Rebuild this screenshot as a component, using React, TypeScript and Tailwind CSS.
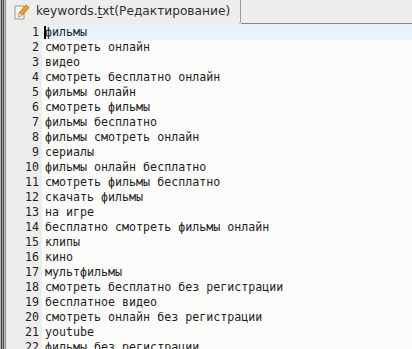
const lines = [
  'фильмы',
  'смотреть онлайн',
  'видео',
  'смотреть бесплатно онлайн',
  'фильмы онлайн',
  'смотреть фильмы',
  'фильмы бесплатно',
  'фильмы смотреть онлайн',
  'сериалы',
  'фильмы онлайн бесплатно',
  'смотреть фильмы бесплатно',
  'скачать фильмы',
  'на игре',
  'бесплатно смотреть фильмы онлайн',
  'клипы',
  'кино',
  'мультфильмы',
  'смотреть бесплатно без регистрации',
  'бесплатное видео',
  'смотреть онлайн без регистрации',
  'youtube',
  'фильмы без регистрации',
]

function EditIcon() {
  return (
    <svg width="16" height="17" viewBox="0 0 16 17" className="shrink-0">
      <path d="M1 3h9v13H1z" fill="#f4f4f2" stroke="#9a9a96" strokeWidth="1" />
      <path d="M4 14l1-4 7-8 3 2.5-7 8z" fill="#f0a020" stroke="#b06a10" strokeWidth="0.8" />
      <path d="M4 14l1-4 3 2.5z" fill="#f3d9a8" />
    </svg>
  )
}

export default function App() {
  return (
    <div className="flex w-[412px] h-[349px] overflow-hidden bg-[#ededeb]">
      {/* window edge */}
      <div className="flex shrink-0">
        <div className="w-px bg-[#b8b8b4]" />
        <div className="w-px bg-[#3c3c3a]" />
        <div className="w-px bg-[#a4a4a0]" />
        <div className="w-px bg-[#4a4a48]" />
        <div className="w-px bg-[#c8c8c4]" />
        <div className="w-px bg-[#8c8c88]" />
      </div>

      <div className="flex flex-col flex-1 min-w-0">
        {/* tabs */}
        <div className="flex h-[24px] shrink-0">
          <div className="flex items-center gap-[6px] w-[235px] pl-[8px] bg-[#ededeb] border-r border-[#9a9a96] rounded-br-[3px] font-['DejaVu_Sans',sans-serif] text-[12.2px] text-[#2e2e2e] pb-[1px]">
            <EditIcon />
            <span className="whitespace-nowrap">
              keywords.<span className="underline underline-offset-2">t</span>xt(Редактирование)
            </span>
          </div>
          <div className="flex-1 border-b border-[#8a8a86]" />
        </div>

        {/* editor */}
        <div className="flex flex-1 pt-[1px] font-['DejaVu_Sans_Mono',monospace] text-[11.65px] text-[#1e1e1e] leading-[15px]">
          <div className="w-[36px] shrink-0 bg-[#ededeb] flex flex-col items-end pr-[3px]">
            {lines.map((_, i) => (
              <div key={i} className="h-[15px]">{i + 1}</div>
            ))}
          </div>
          <div className="flex-1 flex flex-col bg-[#fcfcfa]">
            {lines.map((l, i) => (
              <div
                key={i}
                className={`h-[15px] pl-[3px] whitespace-pre relative ${i === 0 ? 'bg-[#eaf2fc]' : ''}`}
              >
                {i === 0 && <span className="absolute left-[2px] top-[1px] w-[1.5px] h-[13px] bg-black" />}
                {l}
              </div>
            ))}
          </div>
        </div>
      </div>
    </div>
  )
}
